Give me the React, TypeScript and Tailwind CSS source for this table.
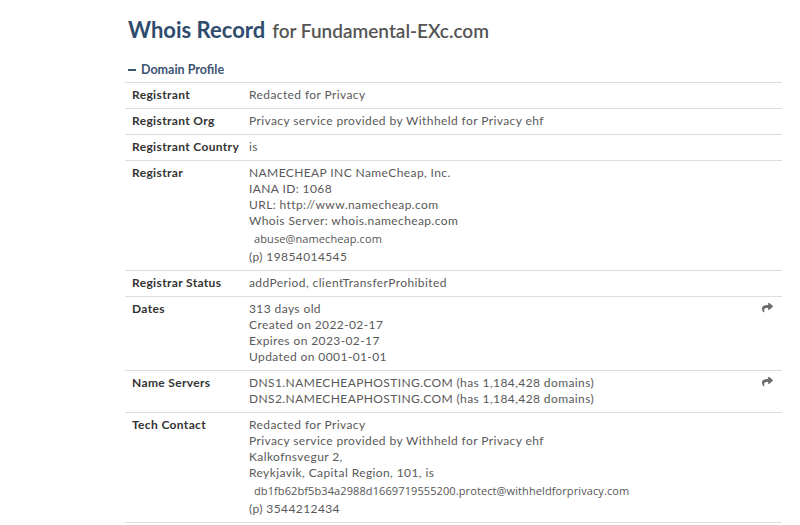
import React from 'react';
import { FaShare } from 'react-icons/fa';

type Row = {
    label: string;
    lines: (string | { email: string })[];
    share?: boolean;
};

const rows: Row[] = [
    { label: 'Registrant', lines: ['Redacted for Privacy'] },
    { label: 'Registrant Org', lines: ['Privacy service provided by Withheld for Privacy ehf'] },
    { label: 'Registrant Country', lines: ['is'] },
    {
        label: 'Registrar',
        lines: [
            'NAMECHEAP INC NameCheap, Inc.',
            'IANA ID: 1068',
            'URL: http://www.namecheap.com',
            'Whois Server: whois.namecheap.com',
            { email: 'abuse@namecheap.com' },
            '(p) 19854014545',
        ],
    },
    { label: 'Registrar Status', lines: ['addPeriod, clientTransferProhibited'] },
    {
        label: 'Dates',
        share: true,
        lines: ['313 days old', 'Created on 2022-02-17', 'Expires on 2023-02-17', 'Updated on 0001-01-01'],
    },
    {
        label: 'Name Servers',
        share: true,
        lines: [
            'DNS1.NAMECHEAPHOSTING.COM (has 1,184,428 domains)',
            'DNS2.NAMECHEAPHOSTING.COM (has 1,184,428 domains)',
        ],
    },
    {
        label: 'Tech Contact',
        lines: [
            'Redacted for Privacy',
            'Privacy service provided by Withheld for Privacy ehf',
            'Kalkofnsvegur 2,',
            'Reykjavik, Capital Region, 101, is',
            { email: 'db1fb62bf5b34a2988d1669719555200.protect@withheldforprivacy.com' },
            '(p) 3544212434',
        ],
    },
];

const App: React.FC = () => {
    return (
        <div className="w-[800px] h-[525px] overflow-hidden bg-white font-['Lato',sans-serif]">
            <div className="ml-[125px] w-[657px] pt-[16px]">
                {/* Title */}
                <h1 className="pl-[3px] flex items-baseline gap-[7px] leading-[28px]">
                    <span className="text-[22px] font-bold text-[#2f4c6e]">Whois Record</span>
                    <span className="text-[19px] font-semibold text-[#555555]">for Fundamental-EXc.com</span>
                </h1>

                {/* Section header */}
                <div className="mt-[17px] pl-[3px] flex items-center gap-[5px] text-[12.5px] font-bold text-[#3c5470] leading-[16px] pb-[4px]">
                    <span className="inline-block w-[8px] h-[2px] bg-[#3c5470]" />
                    Domain Profile
                </div>

                {/* Table */}
                <div className="border-t border-[#dcdcdc]">
                    {rows.map(row => (
                        <div key={row.label} className="flex border-b border-[#dcdcdc] pt-[4px] pb-[5px] text-[12px] leading-[16px]">
                            <div className="w-[117px] shrink-0 pl-[7px] font-bold text-[#333333] tracking-[0.35px]">{row.label}</div>
                            <div className="flex-1 pl-[7px] text-[#595959] tracking-[0.4px]">
                                {row.lines.map((line, i) =>
                                    typeof line === 'string' ? (
                                        <div key={i}>{line}</div>
                                    ) : (
                                        <div key={i} className="h-[20px] pl-[5px] flex items-center font-['Open_Sans',sans-serif] text-[11px] tracking-[0.1px] text-[#555555]">
                                            {line.email}
                                        </div>
                                    )
                                )}
                            </div>
                            <div className="w-[20px] shrink-0 pt-[1px]">
                                {row.share && <FaShare className="w-[11px] h-[11px] text-[#6b6b6b]" />}
                            </div>
                        </div>
                    ))}
                </div>
            </div>
        </div>
    );
};

export default App;
